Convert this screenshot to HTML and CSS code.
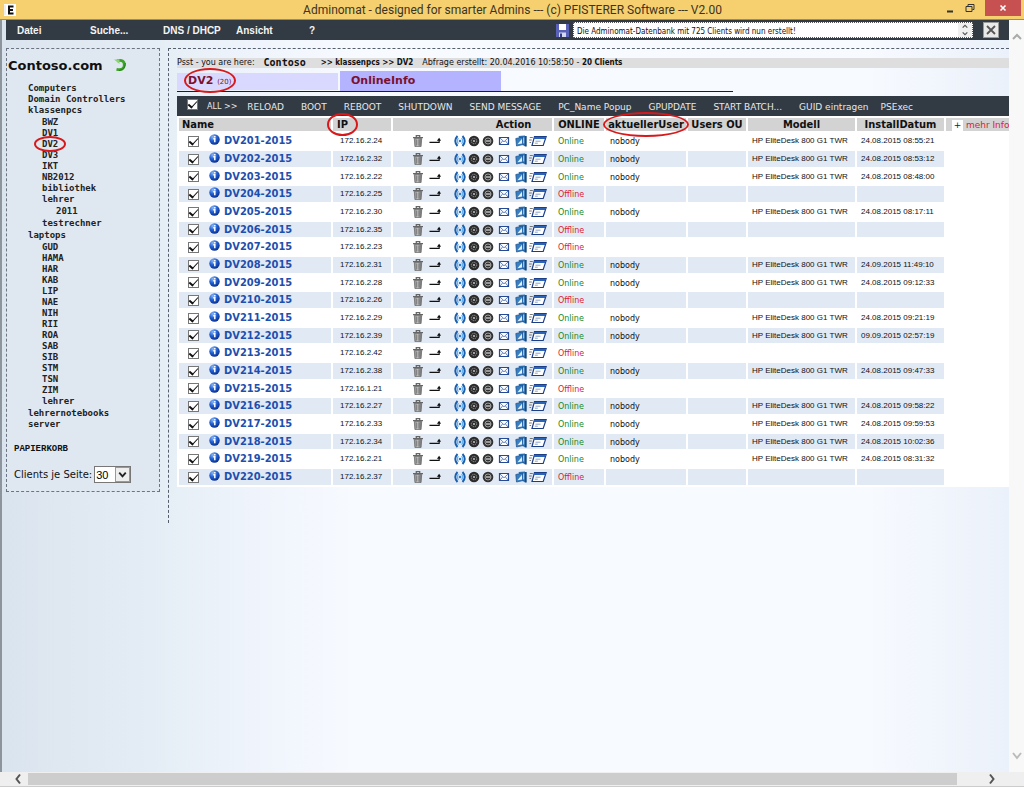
FILE: index.html
```html
<!DOCTYPE html>
<html lang="de">
<head>
<meta charset="utf-8">
<title>Adminomat</title>
<link rel="stylesheet" href="styles.css">
</head>
<body>
<svg class="symbols" aria-hidden="true">
  <defs>
    <radialGradient id="ball" cx="35%" cy="25%" r="80%"><stop offset="0" stop-color="#8fb8f5"/><stop offset=".5" stop-color="#1f5fd0"/><stop offset="1" stop-color="#0a2c8c"/></radialGradient>
    <linearGradient id="metal"><stop offset="0" stop-color="#777"/><stop offset=".4" stop-color="#ccc"/><stop offset="1" stop-color="#666"/></linearGradient>
    <symbol id="i-info" viewBox="0 0 11 11"><circle cx="5.500" cy="5.500" r="5.200" fill="url(#ball)"/><path d="M5.800 2v1.600M4.300 4.700h1.500v3.500" stroke="#fff" stroke-width="1.500" fill="none"/></symbol>
    <symbol id="i-trash" viewBox="0 0 11 12"><path d="M1.800 3.500h7.400l-.6 8H2.400z" fill="url(#metal)" stroke="#666" stroke-width=".7"/><path d="M.5 2.700h10M3.800 2V.7h3.400V2" stroke="#666" stroke-width="1.300" fill="none"/><path d="M4 4.500v6M5.600 4.500v6M7.200 4.500v6" stroke="#777" stroke-width=".8"/></symbol>
    <symbol id="i-move" viewBox="0 0 13 12"><path d="M.5 7.500H11V4" stroke="#111" stroke-width="1.300" fill="none"/><path d="M8.500 5.800 11 2.500l2 3.300z" fill="#111"/></symbol>
    <symbol id="i-wake" viewBox="0 0 12 12"><path d="M3.500 1Q-1 6 3.500 11M8.500 1Q13 6 8.500 11" stroke="#1a5fae" stroke-width="1.900" fill="none"/><path d="M4.400 3.200Q2.200 6 4.400 8.800M7.600 3.200Q9.800 6 7.600 8.800" stroke="#69b2ee" stroke-width="1.300" fill="none"/><circle cx="6" cy="6" r="1.300" fill="#2b76c8"/></symbol>
    <symbol id="i-gear" viewBox="0 0 12 12"><circle cx="6" cy="6" r="5.300" fill="#2b2b2b"/><circle cx="6" cy="6" r="2.700" fill="none" stroke="#999" stroke-width="1" stroke-dasharray="1.300 .8"/><circle cx="6" cy="6" r="1.100" fill="#bbb"/></symbol>
    <symbol id="i-off" viewBox="0 0 12 12"><circle cx="6" cy="6" r="5.300" fill="#333"/><circle cx="6" cy="6" r="3" fill="none" stroke="#aaa" stroke-width=".9"/><path d="M4 6h4.500" stroke="#ddd" stroke-width="1.200"/></symbol>
    <symbol id="i-mail" viewBox="0 0 11 12"><path d="M1 2.500h9v7H1z" fill="#fff" stroke="#244a96" stroke-width="1.200"/><path d="m1.500 3 4 3.800L9.500 3M1.500 9.200 4 6M9.500 9.200 7 6" stroke="#3c62aa" stroke-width=".8" fill="none"/></symbol>
    <symbol id="i-remote" viewBox="0 0 12 12"><path d="M3.500 1 10 .5v10.800L7.500 10z" fill="#2c71b4"/><path d="M9.800 1h1.900v10.500H9.800z" fill="#17497f"/><path d="M.8 3.500 7.500 2l.8 7.500L1.500 11z" fill="#377fc2" stroke="#1c4f89" stroke-width=".7"/><path d="m2.500 9.300 4.500-5.500v4.700z" fill="#e5f2fd"/><path d="M8.700 2.500v6" stroke="#cfe4f7" stroke-width=".9"/></symbol>
    <symbol id="i-window" viewBox="0 0 18 12"><path d="M5.500 1.500h11.700l-3 9H3z" fill="#fff" stroke="#1c3e86" stroke-width="1.200"/><path d="M5.300 2h11.500L16 4H4.700z" fill="#2c64b8"/><path d="M6.500 6.200h5M5.800 8.200h3" stroke="#7d9ac4" stroke-width=".9"/><path d="M.8 2.500h3M0 5h2.800M.5 7.500h1.600" stroke="#555" stroke-width=".8"/></symbol>
  </defs>
</svg>

<header class="titlebar">
  <svg class="app-icon" viewBox="0 0 12 12"><path d="M0 0h12v12H0z" fill="#fff"/><path d="M9.500 2.500H5v7h4.500M5 6h4" stroke="#111" stroke-width="2" fill="none"/><path d="M1 1v10" stroke="#ddd" stroke-width="1"/></svg>
  <h1 class="title">Adminomat - designed for smarter Admins --- (c) PFISTERER Software --- V2.00</h1>
  <div class="window-buttons">
    <button aria-label="Minimieren"><svg viewBox="0 0 10 10"><path d="M2 8.500h6" stroke="#333" stroke-width="2"/></svg></button>
    <button aria-label="Wiederherstellen"><svg viewBox="0 0 10 10"><path d="M1 3.500h6v5H1zM3 3V1.500h6v5H7.500" stroke="#333" fill="none"/></svg></button>
    <button class="close" aria-label="Schließen"><svg viewBox="0 0 10 10"><path d="m2.500 2.500 5 5m0-5-5 5" stroke="#fff" stroke-width="1.600"/></svg></button>
  </div>
</header>

<div class="viewport">
  <div class="page">
    <nav class="menubar">
      <a href="#">Datei</a><a href="#">Suche...</a><a href="#">DNS / DHCP</a><a href="#">Ansicht</a><a href="#">?</a>
      <div class="status">
        <svg class="save" viewBox="0 0 13 13"><path d="M0 0h13v13H0z" fill="#5a62b8"/><path d="M3 0h7v6H3z" fill="#fff"/><path d="M3 8.500h7V13H3z" fill="#d5d8ee"/><path d="M4 9.500h2V13H4z" fill="#333a80"/></svg>
        <div class="message">
          <input type="text" readonly aria-label="Status" value="Die Adminomat-Datenbank mit 725 Clients wird nun erstellt!">
          <svg viewBox="0 0 8 12"><path d="m2 4 2-2 2 2M2 8l2 2 2-2" stroke="#555" fill="none"/></svg>
        </div>
        <button class="dismiss" aria-label="Meldung schließen"><svg viewBox="0 0 10 10"><path d="m1 1 8 8M9 1 1 9" stroke="#555" stroke-width="1.800"/></svg></button>
      </div>
    </nav>

    <div class="columns">
      <aside class="sidebar">
        <div class="domain">Contoso.com
          <svg viewBox="0 0 14 14"><path d="M4 2.800Q11.500 1 11.300 7T3.500 11.300" stroke="#3fa32a" stroke-width="2.800" fill="none"/><path d="M1 1.500h5.500V6z" fill="#8ed278"/><path d="M12.300 5Q12.500 11.500 6 12.500" stroke="#22801c" stroke-width="1" fill="none"/></svg>
        </div>
        <ul class="tree">
          <li><a href="#">Computers</a></li>
          <li><a href="#">Domain Controllers</a></li>
          <li><a href="#">klassenpcs</a>
            <ul>
              <li><a href="#">BWZ</a></li><li><a href="#">DV1</a></li>
              <li><a href="#" class="marked mark-tree">DV2</a></li>
              <li><a href="#">DV3</a></li><li><a href="#">IKT</a></li><li><a href="#">NB2012</a></li><li><a href="#">bibliothek</a></li>
              <li><a href="#">lehrer</a><ul><li><a href="#">2011</a></li></ul></li>
              <li><a href="#">testrechner</a></li>
            </ul>
          </li>
          <li><a href="#">laptops</a>
            <ul>
              <li><a href="#">GUD</a></li><li><a href="#">HAMA</a></li><li><a href="#">HAR</a></li><li><a href="#">KAB</a></li><li><a href="#">LIP</a></li><li><a href="#">NAE</a></li><li><a href="#">NIH</a></li><li><a href="#">RII</a></li><li><a href="#">ROA</a></li><li><a href="#">SAB</a></li><li><a href="#">SIB</a></li><li><a href="#">STM</a></li><li><a href="#">TSN</a></li><li><a href="#">ZIM</a></li><li><a href="#">lehrer</a></li>
            </ul>
          </li>
          <li><a href="#">lehrernotebooks</a></li>
          <li><a href="#">server</a></li>
        </ul>
        <a class="trash" href="#">PAPIERKORB</a>
        <div class="paging"><label for="per-page">Clients je Seite:</label>
          <span class="select"><select id="per-page"><option>30</option></select><svg viewBox="0 0 14 14"><path d="m3.500 5 3.500 4 3.500-4" stroke="#222" stroke-width="2" fill="none"/></svg></span>
        </div>
      </aside>

      <main class="main">
        <p class="crumbs"><span>Psst - you are here:</span> <b class="root">Contoso</b> <b class="path">&gt;&gt; klassenpcs &gt;&gt; DV2</b> <span>Abfrage erstellt: 20.04.2016 10:58:50 - <b>20 Clients</b></span></p>
        <div class="tabs">
          <a class="tab" href="#"><span class="marked mark-tab">DV2 <small>(20)</small></span></a>
          <a class="tab active" href="#">OnlineInfo</a>
        </div>
        <div class="toolbar">
          <input type="checkbox" id="all" checked><label for="all">ALL &gt;&gt;</label>
          <button class="first">RELOAD</button><button>BOOT</button><button>REBOOT</button><button>SHUTDOWN</button><button>SEND MESSAGE</button><button>PC_Name Popup</button><button>GPUPDATE</button><button>START BATCH...</button><button>GUID eintragen</button><button class="near">PSExec</button>
        </div>
        <div class="grid">
          <table class="clients">
            <colgroup><col class="c-name"><col class="c-ip"><col class="c-action"><col class="c-online"><col class="c-user"><col class="c-ou"><col class="c-model"><col class="c-date"><col></colgroup>
            <thead><tr>
              <th class="left">Name</th><th class="ip"><span class="marked mark-ip">IP</span></th><th class="action">Action</th><th>ONLINE</th><th><span class="marked mark-user">aktuellerUser</span></th><th>Users OU</th><th>Modell</th><th>InstallDatum</th>
              <th class="more"><button aria-label="mehr">+</button> <a href="#">mehr Info</a></th>
            </tr></thead>
            <tbody id="rows"></tbody>
          </table>
        </div>
      </main>
    </div>
  </div>
  <div class="vscroll"><svg viewBox="0 0 12 12"><path d="m2 8 4-4 4 4" stroke="#aaa" stroke-width="2" fill="none"/></svg><svg viewBox="0 0 12 12"><path d="m2 4 4 5 4-5" stroke="#bbb" stroke-width="2" fill="none"/></svg></div>
</div>
<div class="hscroll"><svg viewBox="0 0 12 12"><path d="M8 1.500 4.500 6 8 10.500" stroke="#555" stroke-width="2" fill="none"/></svg><div class="track"><div class="thumb"></div></div><svg viewBox="0 0 12 12"><path d="M4 1.500 7.500 6 4 10.500" stroke="#555" stroke-width="2" fill="none"/></svg></div>
<script src="rows.js"></script>
</body>
</html>
```
FILE: rows.js
```js
// name, last two octets, install date (empty when the client is offline)
const clients = [
  ["DV201", "2.24", "24.08.2015 08:55:21"],
  ["DV202", "2.32", "24.08.2015 08:53:12"],
  ["DV203", "2.22", "24.08.2015 08:48:00"],
  ["DV204", "2.25", ""],
  ["DV205", "2.30", "24.08.2015 08:17:11"],
  ["DV206", "2.35", ""],
  ["DV207", "2.23", ""],
  ["DV208", "2.31", "24.09.2015 11:49:10"],
  ["DV209", "2.28", "24.08.2015 09:12:33"],
  ["DV210", "2.26", ""],
  ["DV211", "2.29", "24.08.2015 09:21:19"],
  ["DV212", "2.39", "09.09.2015 02:57:19"],
  ["DV213", "2.42", ""],
  ["DV214", "2.38", "24.08.2015 09:47:33"],
  ["DV215", "1.21", ""],
  ["DV216", "2.27", "24.08.2015 09:58:22"],
  ["DV217", "2.33", "24.08.2015 09:59:53"],
  ["DV218", "2.34", "24.08.2015 10:02:36"],
  ["DV219", "2.21", "24.08.2015 08:31:32"],
  ["DV220", "2.37", ""]
];
const actions = [
  ["trash", "Löschen"], ["move", "Verschieben"], ["wake", "Boot"], ["gear", "Reboot"],
  ["off", "Shutdown"], ["mail", "Nachricht"], ["remote", "Fernsteuerung"], ["window", "Popup"]
];
const icon = n => `<svg><use href="#i-${n}"/></svg>`;
const buttons = actions.map(([n, t]) => `<button class="a-${n}" aria-label="${t}">${icon(n)}</button>`).join("");
document.getElementById("rows").innerHTML = clients.map(([name, ip, date]) => `
  <tr>
    <td><div class="name"><input type="checkbox" checked aria-label="${name}-2015">${icon("info")}<a href="#">${name}-2015</a></div></td>
    <td class="ip">172.16.${ip}</td>
    <td><div class="actions">${buttons}</div></td>
    <td class="state ${date ? "on" : "off"}">${date ? "Online" : "Offline"}</td>
    <td class="user">${date ? "nobody" : ""}</td>
    <td></td>
    <td>${date ? "HP EliteDesk 800 G1 TWR" : ""}</td>
    <td>${date}</td>
    <td class="blank"></td>
  </tr>`).join("");
```
FILE: styles.css
```css
* { box-sizing: border-box; }
body {
  margin: 0;
  min-height: 100vh;
  display: flex;
  flex-direction: column;
  font-family: "DejaVu Sans", Verdana, sans-serif;
  font-size: 9px;
  color: #111;
  background: #fff;
}
a { color: inherit; text-decoration: none; }
button { border: 0; padding: 0; background: none; color: inherit; font: inherit; }
svg { display: block; }
.symbols { position: absolute; width: 0; height: 0; }

.titlebar {
  display: grid;
  grid-template-columns: 1fr auto 1fr;
  align-items: center;
  height: 20px;
  padding: 0 3px 0 4px;
  background: #f6d06e;
  border-bottom: 1px solid #a08c58;
}
.app-icon { width: 12px; height: 12px; }
.title { margin: 0; font: 12px Roboto, "Open Sans", sans-serif; color: #3c3423; }
.window-buttons { display: flex; justify-content: flex-end; align-items: center; gap: 10px; align-self: start; }
.window-buttons svg { width: 10px; height: 10px; }
.window-buttons .close { display: grid; place-items: center; width: 36px; height: 16px; background: #c75050; }

.viewport { flex: 1; display: flex; border-left: 2px solid #8e949c; }
.page {
  flex: 1;
  min-width: 0;
  padding-left: 4px;
  background: linear-gradient(90deg, #d9e4ef 0, #dee6f0 4%, #e4edf5 15%, #eff4fc 25%, #f7faff 35%, #f7faff 86%, #ebf1fa 100%);
}

.menubar { display: flex; align-items: center; height: 20px; padding: 0 10px 0 11px; background: #323a44; color: #f4f4f4; font: bold 10px "Liberation Sans", Arial, sans-serif; }
.menubar > a { width: 73px; }
.status { flex: 1; display: flex; align-items: center; justify-content: flex-end; gap: 4px; }
.save { width: 13px; height: 13px; }
.message { display: flex; align-items: center; width: 400px; height: 16px; background: #fff; border: 1px dotted #555; }
.message input { flex: 1; border: 0; padding: 2px 3px 0; height: 14px; outline: 0; background: none; color: #111; font: 8px "DejaVu Sans Condensed", "DejaVu Sans", sans-serif; }
.message svg { width: 14px; height: 14px; background: #f0f0f0; }
.dismiss { display: grid; place-items: center; width: 16px; height: 16px; margin-left: 6px; background: #e9e9e9; border: 1px solid #999; }
.dismiss svg { width: 10px; height: 10px; }

.columns { display: flex; align-items: flex-start; gap: 8px; padding-top: 8px; }
.sidebar { width: 154px; padding: 8px 1px; border: 1px dashed #6b7480; background: #dfe8f1; }
.domain { display: flex; align-items: center; gap: 10px; height: 16px; margin-bottom: 10px; font-size: 13px; font-weight: bold; white-space: nowrap; }
.domain svg { width: 14px; height: 14px; }
.tree, .tree ul { margin: 0; list-style: none; }
.tree { padding: 0 0 0 20px; font: bold 9px/11px "DejaVu Sans Mono", monospace; color: #222; }
.tree ul { padding: 1px 0 1px 14px; }
.trash { display: block; margin: 14px 0 11px 6px; font: bold 9px/11px "Liberation Mono", monospace; }
.paging { display: flex; align-items: center; padding-left: 6px; font-size: 10px; white-space: nowrap; }
.select { display: flex; align-items: center; width: 37px; height: 17px; margin-left: 2px; border: 1px solid #777; background: #fff; }
.select select { appearance: none; flex: 1; min-width: 0; border: 0; padding: 0 1px; background: none; font: 11px "Liberation Sans", Arial, sans-serif; }
.select svg { width: 15px; height: 15px; border: 1px solid #999; background: #eee; }

.marked { position: relative; }
.marked::after { content: ""; position: absolute; border: 2px solid #d8191c; border-radius: 50%; pointer-events: none; }
.mark-tree::after { inset: -3px -8px; }
.mark-tab::after { inset: -6px -4px; }
.mark-ip::after { inset: -5px -10px; }
.mark-user::after { inset: -6px -5px; }

.main { flex: 1; min-width: 0; padding: 9px 0 36px 8px; border: dashed #55606c; border-width: 1px 0 0 1px; }
.crumbs { display: flex; gap: 9px; margin: 0; background: #dedede; font-size: 8px; line-height: 10px; white-space: nowrap; }
.crumbs .root { font: bold 10px/10px "DejaVu Sans Mono", monospace; margin-right: 6px; }
.crumbs .path, .crumbs span b { font-family: "DejaVu Sans Condensed", "DejaVu Sans", sans-serif; }
.tabs { display: flex; align-items: center; gap: 2px; width: 556px; margin-top: 3px; border-bottom: 1px solid #1a1f26; }
.tab { width: 161px; padding: 0 11px; background: #d9d9ff; color: #7b1030; font-size: 11px; font-weight: bold; line-height: 16px; }
.tab small { font-size: 7px; font-weight: normal; }
.tab.active { background: #b3b3ff; line-height: 20px; }
.toolbar { display: flex; height: 20px; margin-top: 4px; padding-left: 9px; background: #323a44; color: #e8e8e8; font-size: 9px; line-height: 22px; white-space: nowrap; overflow: hidden; }
.toolbar button { margin-left: 17px; }
.toolbar button.near { margin-left: 12px; }
.toolbar button.first { margin-left: 10px; }
.toolbar label { margin-left: 9px; font-size: 8px; }

input[type="checkbox"] { appearance: none; width: 11px; height: 11px; margin: 0; border: 1px solid #777; background: #fff; display: grid; place-items: center; }
input[type="checkbox"]:checked::before { content: ""; width: 7px; height: 4px; margin-top: -2px; border: solid #111; border-width: 0 0 1px 2px; transform: rotate(-48deg); }
.toolbar input[type="checkbox"] { margin: 3px 0 0 1px; }

.grid { background: #fff; overflow-x: clip; }
/* the last column runs under the right edge of the page */
.clients { width: calc(100% + 2px); table-layout: fixed; border-spacing: 2px; border-collapse: separate; white-space: nowrap; }
.c-name { width: 152px; }
.c-ip { width: 58px; }
.c-action { width: 159px; }
.c-online { width: 50px; }
.c-user { width: 80px; }
.c-ou { width: 58px; }
.c-model { width: 107px; }
.c-date { width: 87px; }
.clients th { height: 13px; padding: 1px 0 0; background: #d3d3d3; font: bold 11px/12px "DejaVu Sans Condensed", "DejaVu Sans", sans-serif; }
.clients th.left { padding-left: 3px; text-align: left; }
.clients th.ip { padding-left: 4px; text-align: left; }
.clients th.action { padding-left: 82px; }
.clients th.more { font: 9px/12px "DejaVu Sans", sans-serif; text-align: left; padding-left: 6px; color: #d23; }
.more button { width: 11px; height: 11px; background: #fff; color: #222; line-height: 11px; }
.clients td { height: 16px; padding: 0 0 0 4px; font: 8px/12px "Liberation Sans", Arial, sans-serif; }
.clients tr:nth-child(3n) td { height: 15px; }
.clients td.ip { padding-left: 7px; }
.clients td.state, .clients td.user { padding-top: 2px; font: 8px/12px "DejaVu Sans", sans-serif; }
.on { color: #138a1c; }
.off { color: #dc1a34; }
.clients tbody tr:nth-child(even) td:not(.blank) { background: #e1e9f5; }
.name { display: flex; align-items: center; padding-left: 5px; height: 12px; }
.name svg { width: 11px; height: 11px; margin: 0 4px 3px 10px; }
.name a { color: #1d4fae; font: bold 11px/12px "DejaVu Sans Condensed", "DejaVu Sans", sans-serif; }
.actions { display: flex; align-items: center; gap: 2px; height: 12px; padding-left: 15px; }
.actions svg { width: 12px; height: 12px; }
.actions .a-move { margin: 0 11px 0 3px; }
.actions .a-mail { margin: 0 3px 0 2px; }
.actions .a-window svg { width: 18px; }

.vscroll { width: 15px; display: flex; flex-direction: column; justify-content: space-between; align-items: center; padding: 11px 0; background: #f8f8f8; }
.vscroll svg { width: 12px; height: 12px; }
.hscroll { display: flex; align-items: center; height: 15px; padding: 1px 26px 1px 12px; background: #efefef; border-bottom: 1px solid #ccc; }
.hscroll svg { width: 12px; height: 12px; }
.track { flex: 1; height: 12px; margin: 0 0 0 4px; }
.thumb { width: 97%; height: 12px; background: #cdcdcd; }
```
